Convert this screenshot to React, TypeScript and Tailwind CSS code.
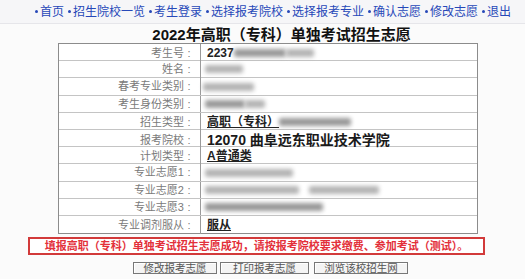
import React from 'react';

const navItems = ['首页', '招生院校一览', '考生登录', '选择报考院校', '选择报考专业', '确认志愿', '修改志愿', '退出'];

// blurred placeholder for hidden personal data
function Blur({ w, ml = 0, dark = false }: { w: number; ml?: number; dark?: boolean }) {
  return (
    <div
      className={`h-[8px] rounded-[2px] blur-[2px] ${dark ? 'bg-[#999]' : 'bg-[#b4b4b4]'}`}
      style={{ width: w, marginLeft: ml }}
    />
  );
}

type Row = { label: string; value: React.ReactNode };

const rows: Row[] = [
  {
    label: '考生号',
    value: (
      <div className="flex items-center">
        <span className="font-bold text-[12px] text-[#222]">2237</span>
        <Blur w={52} dark />
        <Blur w={28} ml={0} />
      </div>
    ),
  },
  { label: '姓名', value: <Blur w={38} ml={-2} /> },
  { label: '春考专业类别', value: <Blur w={51} ml={-4} /> },
  {
    label: '考生身份类别',
    value: (
      <div className="flex items-center">
        <Blur w={40} ml={-2} dark />
        <Blur w={20} />
      </div>
    ),
  },
  {
    label: '招生类型',
    value: (
      <div className="flex items-center">
        <span className="font-bold text-[12px] text-[#222] underline">高职（专科）</span>
        <Blur w={72} dark />
      </div>
    ),
  },
  {
    label: '报考院校',
    value: <span className="font-bold text-[14px] text-[#1a1a1a]">12070 曲阜远东职业技术学院</span>,
  },
  {
    label: '计划类型',
    value: <span className="font-bold text-[12px] text-[#222] underline">A普通类</span>,
  },
  { label: '专业志愿1', value: <Blur w={88} ml={-2} /> },
  {
    label: '专业志愿2',
    value: (
      <div className="flex items-center">
        <Blur w={94} ml={-2} />
        <Blur w={70} ml={10} />
      </div>
    ),
  },
  { label: '专业志愿3', value: <Blur w={118} ml={-2} dark /> },
  {
    label: '专业调剂服从',
    value: <span className="font-bold text-[12px] text-[#222] underline">服从</span>,
  },
];

export default function App() {
  return (
    <div
      className="w-[525px] h-[279px] overflow-hidden bg-[#fbfbfb]"
      style={{ fontFamily: '"Liberation Sans", "Noto Sans CJK SC", sans-serif' }}
    >
      {/* top nav */}
      <div className="h-[24px] flex items-center pl-[35px] gap-[4px] bg-[#f6f6f8] border-b border-[#e6e6ea] text-[12px] text-[#2748b8]">
        {navItems.map((item) => (
          <div key={item} className="flex items-center">
            <span className="w-[3px] h-[3px] rounded-full bg-[#2748b8] mr-[2px]" />
            <span>{item}</span>
          </div>
        ))}
      </div>

      {/* title */}
      <div className="h-[19px] flex items-end justify-center pl-[38px] text-[15px] font-bold text-[#111] leading-[17px]">
        2022年高职（专科）单独考试招生志愿
      </div>

      {/* info table */}
      <div className="ml-[58px] w-[420px] border border-[#8c8c8c] bg-white">
        {rows.map((row, i) => (
          <div
            key={row.label}
            className={`grid grid-cols-[142px_1fr] h-[17.2px] ${i < rows.length - 1 ? 'border-b border-[#c4c4c4]' : ''}`}
          >
            <div className="flex items-center justify-end pr-[6px] border-r border-[#9a9a9a] text-[11px] text-[#7a7a7a]">
              <span>{row.label}</span>
              <span className="w-[10px] text-center">:</span>
            </div>
            <div className="flex items-center pl-[6px]">{row.value}</div>
          </div>
        ))}
      </div>

      {/* success notice */}
      <div className="mt-[3px] ml-[28px] w-[457px] h-[18px] flex items-center justify-center border-2 border-[#d23a3a] bg-white text-[11px] font-bold text-[#e3303a]">
        填报高职（专科）单独考试招生志愿成功，请按报考院校要求缴费、参加考试（测试）。
      </div>

      {/* actions */}
      <div className="mt-[7px] ml-[133px] flex gap-[3px]">
        {['修改报考志愿', '打印报考志愿', '浏览该校招生网'].map((b, i) => (
          <button
            key={b}
            className={`h-[12px] flex items-center justify-center border border-[#777] bg-[#f4f4f4] shadow-[inset_1px_1px_0_#fff] text-[10.5px] leading-none text-[#555] ${
              i === 0 ? 'w-[84px]' : i === 1 ? 'w-[89px] mr-[2px]' : 'w-[94px]'
            }`}
          >
            {b}
          </button>
        ))}
      </div>
    </div>
  );
}
